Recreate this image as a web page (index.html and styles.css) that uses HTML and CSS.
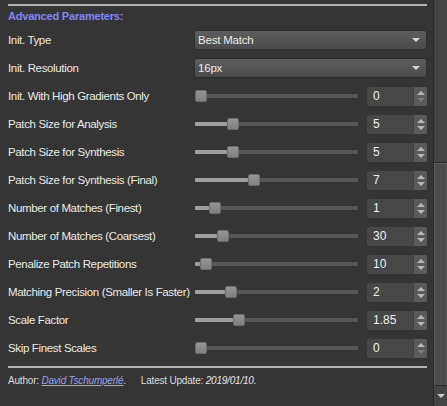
FILE: index.html
```html
<!DOCTYPE html>
<html>
<head>
<meta charset="utf-8">
<link rel="stylesheet" href="styles.css">
</head>
<body>
<div class="panel">
  <div class="content">
    <div class="sep"></div>
    <div class="title">Advanced Parameters:</div>
    <div class="row">
      <span class="label">Init. Type</span>
      <div class="combo"><span>Best Match</span><i class="caret"></i></div>
    </div>
    <div class="row">
      <span class="label">Init. Resolution</span>
      <div class="combo"><span>16px</span><i class="caret"></i></div>
    </div>
    <div class="row">
      <span class="label">Init. With High Gradients Only</span>
      <div class="ctl"><div class="slider"><div class="fill" style="width:0px"></div><div class="handle" style="left:0px"></div></div><div class="spin"><span class="val">0</span><div class="btns"><i class="up"></i><i class="down off"></i></div></div></div>
    </div>
    <div class="row">
      <span class="label">Patch Size for Analysis</span>
      <div class="ctl"><div class="slider"><div class="fill" style="width:32px"></div><div class="handle" style="left:32px"></div></div><div class="spin"><span class="val">5</span><div class="btns"><i class="up"></i><i class="down"></i></div></div></div>
    </div>
    <div class="row">
      <span class="label">Patch Size for Synthesis</span>
      <div class="ctl"><div class="slider"><div class="fill" style="width:32px"></div><div class="handle" style="left:32px"></div></div><div class="spin"><span class="val">5</span><div class="btns"><i class="up"></i><i class="down"></i></div></div></div>
    </div>
    <div class="row">
      <span class="label">Patch Size for Synthesis (Final)</span>
      <div class="ctl"><div class="slider"><div class="fill" style="width:53px"></div><div class="handle" style="left:53px"></div></div><div class="spin"><span class="val">7</span><div class="btns"><i class="up"></i><i class="down"></i></div></div></div>
    </div>
    <div class="row">
      <span class="label">Number of Matches (Finest)</span>
      <div class="ctl"><div class="slider"><div class="fill" style="width:14px"></div><div class="handle" style="left:14px"></div></div><div class="spin"><span class="val">1</span><div class="btns"><i class="up"></i><i class="down"></i></div></div></div>
    </div>
    <div class="row">
      <span class="label">Number of Matches (Coarsest)</span>
      <div class="ctl"><div class="slider"><div class="fill" style="width:22px"></div><div class="handle" style="left:22px"></div></div><div class="spin"><span class="val">30</span><div class="btns"><i class="up"></i><i class="down"></i></div></div></div>
    </div>
    <div class="row">
      <span class="label">Penalize Patch Repetitions</span>
      <div class="ctl"><div class="slider"><div class="fill" style="width:5px"></div><div class="handle" style="left:5px"></div></div><div class="spin"><span class="val">10</span><div class="btns"><i class="up"></i><i class="down"></i></div></div></div>
    </div>
    <div class="row">
      <span class="label">Matching Precision (Smaller Is Faster)</span>
      <div class="ctl"><div class="slider"><div class="fill" style="width:30px"></div><div class="handle" style="left:30px"></div></div><div class="spin"><span class="val">2</span><div class="btns"><i class="up"></i><i class="down"></i></div></div></div>
    </div>
    <div class="row">
      <span class="label">Scale Factor</span>
      <div class="ctl"><div class="slider"><div class="fill" style="width:38px"></div><div class="handle" style="left:38px"></div></div><div class="spin"><span class="val">1.85</span><div class="btns"><i class="up"></i><i class="down"></i></div></div></div>
    </div>
    <div class="row">
      <span class="label">Skip Finest Scales</span>
      <div class="ctl"><div class="slider"><div class="fill" style="width:0px"></div><div class="handle" style="left:0px"></div></div><div class="spin"><span class="val">0</span><div class="btns"><i class="up"></i><i class="down off"></i></div></div></div>
    </div>
    <div class="sep bottom"></div>
    <div class="footer">
      <span>Author: <a class="link">David Tschumperlé</a>.</span>
      <span class="upd">Latest Update: <em>2019/01/10.</em></span>
    </div>
  </div>
  <div class="scrollbar">
    <div class="track"></div>
    <div class="thumb"></div>
    <div class="arrow"><i class="sdown"></i></div>
  </div>
</div>
</body>
</html>
```

FILE: styles.css
```css
* { box-sizing: border-box; }
html, body { margin: 0; padding: 0; background: #353535; }
body {
  font-family: "Liberation Sans", Arial, sans-serif;
  font-size: 11.5px;
  letter-spacing: -0.35px;
  color: #ebebe6;
}
.panel {
  width: 447px;
  height: 406px;
  display: flex;
  overflow: hidden;
}
.content {
  width: 433px;
  padding: 4px 6px 0 8px;
}
.sep {
  height: 2px;
  background: #b4b4b4;
}
.sep.bottom { margin-top: 4px; }
.title {
  height: 20px;
  line-height: 20px;
  font-weight: bold;
  letter-spacing: -0.2px;
  font-size: 11px;
  color: #8585f5;
}
.row {
  height: 28px;
  display: grid;
  grid-template-columns: 186px 1fr;
  align-items: center;
}
.label { white-space: nowrap; }
.combo {
  height: 20px;
  margin-top: -1px;
  border: 1px solid #2e2e2e;
  border-radius: 3px;
  background: linear-gradient(#5e5e5e, #4a4a4a);
  display: flex;
  align-items: center;
  justify-content: space-between;
  padding: 0 6px 0 3px;
  color: #ececec;
  letter-spacing: -0.2px;
}
.caret {
  width: 0; height: 0;
  border-left: 4px solid transparent;
  border-right: 4px solid transparent;
  border-top: 4px solid #d8d8d8;
}
.ctl {
  display: flex;
  align-items: center;
}
.slider {
  position: relative;
  margin-left: 1px;
  width: 163px;
  height: 4px;
  background: #585858;
  border-radius: 1px;
}
.fill {
  position: absolute;
  left: 0; top: 0; bottom: 0;
  background: #9e9e9e;
  border-radius: 1px;
}
.handle {
  position: absolute;
  top: -4px;
  width: 12px;
  height: 12px;
  border-radius: 2px;
  background: linear-gradient(#959595, #808080);
  border: 1px solid #6c6c6c;
}
.spin {
  margin-left: auto;
  width: 60px;
  height: 19px;
  display: flex;
  border-radius: 2px;
  background: #474747;
  overflow: hidden;
}
.val {
  flex: 1;
  padding-left: 6px;
  line-height: 19px;
  color: #f0f0f0;
  font-size: 12px;
  letter-spacing: 0;
}
.btns {
  width: 14px;
  background: #5a5a5a;
  border-left: 1px solid #404040;
  display: flex;
  flex-direction: column;
  align-items: center;
  justify-content: center;
  gap: 3px;
}
.up, .down {
  width: 0; height: 0;
  border-left: 4px solid transparent;
  border-right: 4px solid transparent;
}
.up { border-bottom: 4px solid #b8b8b8; }
.down { border-top: 4px solid #b8b8b8; }
.down.off { border-top-color: #7a7a7a; }
.footer {
  height: 24px;
  display: flex;
  align-items: center;
  font-size: 10px;
  letter-spacing: -0.2px;
  color: #dcdcdc;
}
.link {
  color: #9aa4ee;
  font-style: italic;
  text-decoration: underline;
}
.upd { margin-left: 15px; }
.upd em { color: #e8e8e8; }
.scrollbar {
  width: 14px;
  display: flex;
  flex-direction: column;
  border-left: 1px solid #2a2a2a;
}
.track {
  height: 163px;
  background: #444444;
  border-bottom: 1px solid #2a2a2a;
}
.thumb {
  flex: 1;
  background: #4b4b4b;
  border: 1px solid #5e5e5e;
  border-bottom-color: #2a2a2a;
}
.arrow {
  height: 20px;
  background: #444444;
  display: flex;
  align-items: center;
  justify-content: center;
}
.sdown {
  width: 0; height: 0;
  border-left: 4px solid transparent;
  border-right: 4px solid transparent;
  border-top: 4px solid #c8c8c8;
}
```
